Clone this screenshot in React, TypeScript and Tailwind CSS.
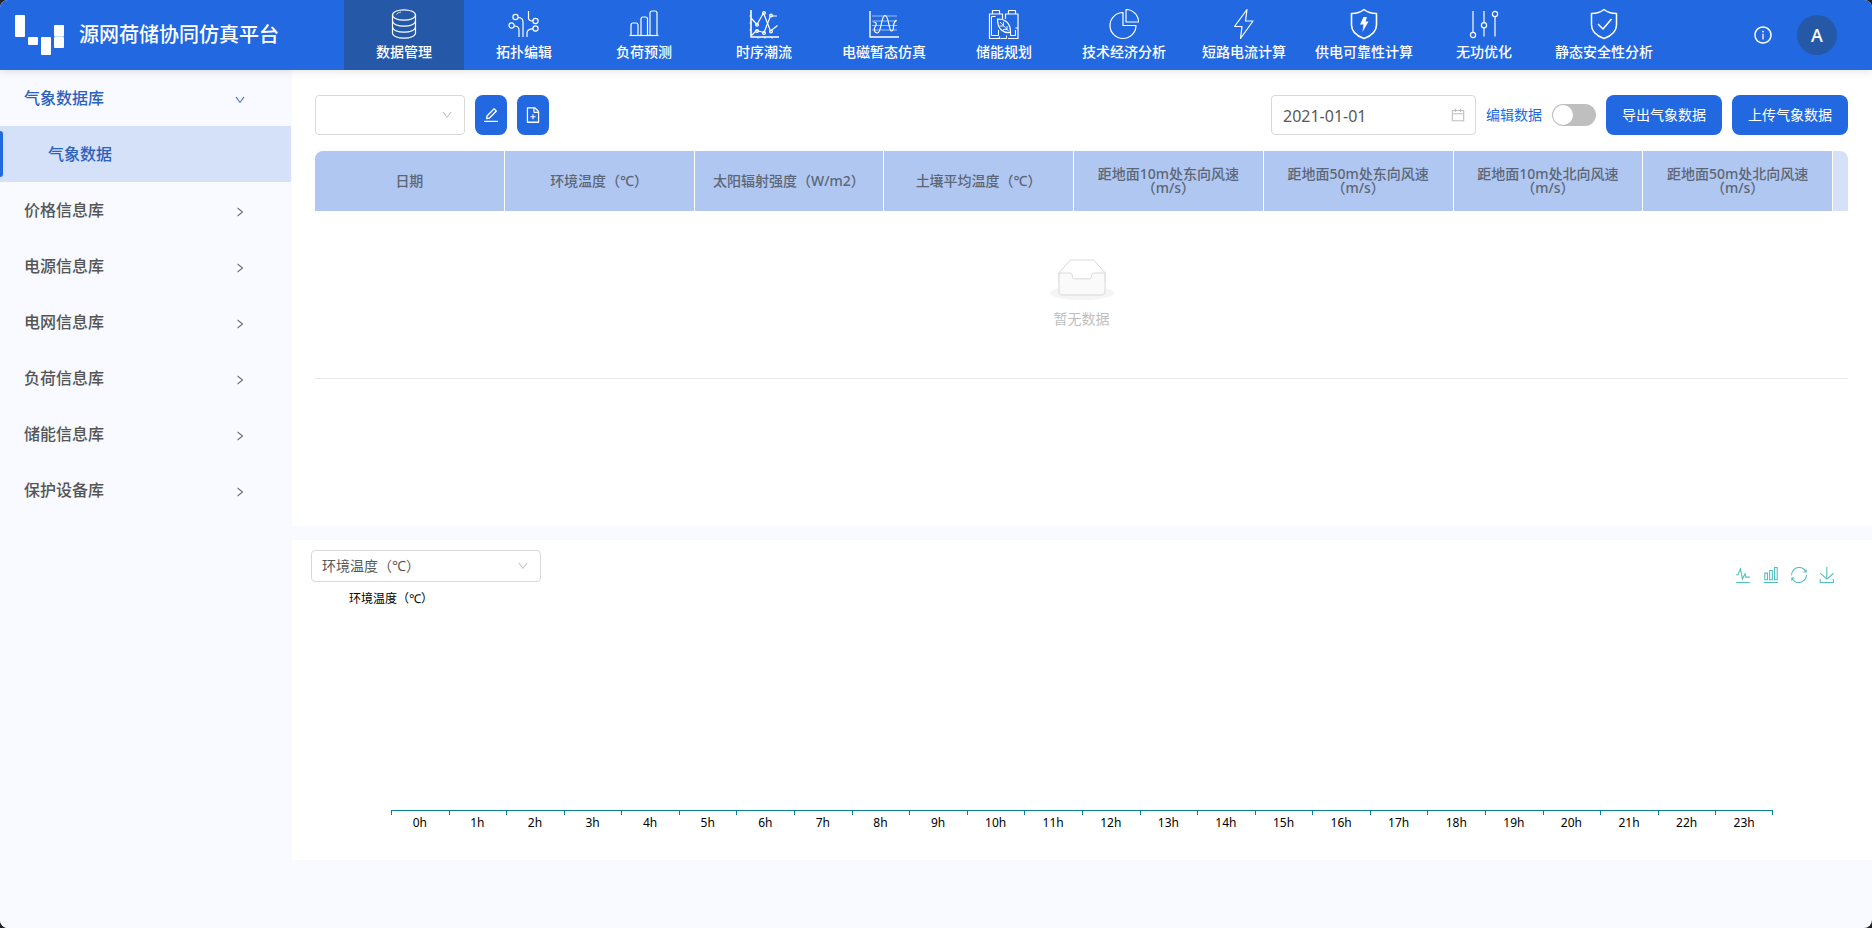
import React, { useState } from "react";
import {
  AiOutlineCalendar,
  AiOutlineDown,
  AiOutlineEdit,
  AiOutlineFileAdd,
  AiOutlineInfoCircle,
  AiOutlineRight,
} from "react-icons/ai";

function NavSvg({ children }: { children: React.ReactNode }) {
  return (
    <svg
      className="h-8 w-8"
      viewBox="0 0 32 32"
      fill="none"
      stroke="currentColor"
      strokeWidth="1.2"
      strokeLinejoin="round"
      aria-hidden="true"
    >
      {children}
    </svg>
  );
}

const DatabaseIcon = (
  <NavSvg>
    <ellipse cx="16" cy="7" rx="11.5" ry="5.2" />
    <path d="M4.500 7v18c0 2.900 5.100 5.200 11.500 5.200s11.500-2.300 11.500-5.200V7" />
    <path d="M4.500 13c0 2.900 5.100 5.200 11.500 5.200s11.500-2.300 11.500-5.200M4.500 19c0 2.900 5.100 5.200 11.500 5.200s11.500-2.300 11.500-5.200" />
    <path d="M8.500 6.500c1-1.500 2.500-2.100 4.500-2.400" strokeWidth="0.8" />
  </NavSvg>
);

const TopologyIcon = (
  <NavSvg>
    <circle cx="7.500" cy="9" r="2.600" />
    <circle cx="3.600" cy="17.500" r="2.600" />
    <circle cx="27.500" cy="13" r="2.600" />
    <circle cx="27.500" cy="20.500" r="2.600" />
    <path d="M10.100 9.500c3.600 0 4.900 1.500 4.900 4.500v15M6.200 18c3.300 0 4.800 1 4.800 4v7" />
    <path d="M20.500 3v7c0 2 1.500 3 4.400 3M24.900 20.800c-4.200 0-5.900 1.200-5.900 4.200v4" />
  </NavSvg>
);

const BarsIcon = (
  <NavSvg>
    <path d="M1.500 27.500h29" />
    <path d="M3 27.500V17a2 2 0 0 1 2-2h3a2 2 0 0 1 2 2v10.500M13 27.500V11a2 2 0 0 1 2-2h2.500a2 2 0 0 1 2 2v16.500M22 27.500V5a2 2 0 0 1 2-2h3a2 2 0 0 1 2 2v22.500" />
  </NavSvg>
);

const SeriesIcon = (
  <NavSvg>
    <path d="M3 2v27h28" strokeWidth="1.600" />
    <path d="M1.500 8h1.500M1.500 15h1.500M1.500 22h1.500M10 29v1.500M17 29v1.500M24 29v1.500" />
    <path d="M3 10l6 6.500L15.500 5l7 18 7-5.500" />
    <path d="M3.500 27.500l5-5 7.500 2L22.500 8h6.500" />
    <circle cx="9" cy="16.800" r="1.400" />
    <circle cx="16" cy="5" r="1.400" />
    <circle cx="23" cy="7.500" r="1.400" />
    <circle cx="9" cy="23" r="1.400" />
    <circle cx="16" cy="25" r="1.400" />
    <circle cx="23" cy="23.500" r="1.400" />
  </NavSvg>
);

const WaveIcon = (
  <NavSvg>
    <path d="M2 3v26h29" strokeWidth="1.400" />
    <path d="M4 8h25M4 13h25M4 17.500h25M4 22h25" strokeWidth="0.700" opacity="0.800" />
    <path d="M5.500 14c3 0 3.500 2 2 4s-2 7 2 7 3.500-17.500 7.500-17.500 3.500 15.500 6.500 15.500 1.500-5 2.500-7.500 1.500-2.500 2.500-3.500" />
  </NavSvg>
);

const BatteryIcon = (
  <NavSvg>
    <path d="M11.500 28.500v2H1.500V6h13v5M4.500 6V2.500h7V6M30 20V6H17.500v5M20.500 6V2.500h7V6M20 30.500h10V20h-2.500" />
    <path d="M3.500 27.500h7V22M3.500 27.500V8.500h4M12.500 30.500h6v-3" strokeWidth="1" />
    <path d="M9.500 11c6 0 13 2 13 13.500-7 1-13-3-13-13.500z" />
    <path d="M12 14l9 9.500M15.500 14v4h-4M19 18v3.500h-4" strokeWidth="0.900" />
    <path d="M22.500 24.500v3h5V22" strokeWidth="1" />
  </NavSvg>
);

const PieIcon = (
  <NavSvg>
    <path d="M15 4.500A13 13 0 1 0 28 17.500H15z" />
    <path d="M18 1.500a12.500 12.500 0 0 1 12.500 12.500H18z" />
  </NavSvg>
);

const BoltIcon = (
  <NavSvg>
    <path d="M19 1.500L6.500 18.500h7.500L12.500 30.500 25 13h-7.500z" />
  </NavSvg>
);

const ShieldBoltIcon = (
  <NavSvg>
    <path
      d="M16 1.500c3 2.500 7.500 4 12.500 4v11.500c0 6.500-5.500 11-12.500 13.500C9 28 3.500 23.500 3.500 17V5.500c5 0 9.500-1.500 12.500-4z"
      strokeWidth="1.600"
    />
    <path d="M15.500 9h3.500l-1.500 4.500h3L14.500 24l1-7.500h-3.500z" fill="currentColor" stroke="none" />
  </NavSvg>
);

const SlidersIcon = (
  <NavSvg>
    <path d="M5 3v21.500M16 3v11.500M16 20v8.500M27 8.500v20" />
    <circle cx="5" cy="27" r="2.600" />
    <circle cx="16" cy="17.200" r="2.600" />
    <circle cx="27" cy="6" r="2.600" />
  </NavSvg>
);

const ShieldCheckIcon = (
  <NavSvg>
    <path
      d="M16 1.500c3 2.500 7.500 4 12.500 4v11.500c0 6.500-5.500 11-12.500 13.500C9 28 3.500 23.500 3.500 17V5.500c5 0 9.500-1.500 12.500-4z"
      strokeWidth="1.500"
    />
    <path d="M10 16l5 5L23.500 11" strokeWidth="1.500" />
  </NavSvg>
);

const navItems = [
  { label: "数据管理", icon: DatabaseIcon },
  { label: "拓扑编辑", icon: TopologyIcon },
  { label: "负荷预测", icon: BarsIcon },
  { label: "时序潮流", icon: SeriesIcon },
  { label: "电磁暂态仿真", icon: WaveIcon },
  { label: "储能规划", icon: BatteryIcon },
  { label: "技术经济分析", icon: PieIcon },
  { label: "短路电流计算", icon: BoltIcon },
  { label: "供电可靠性计算", icon: ShieldBoltIcon },
  { label: "无功优化", icon: SlidersIcon },
  { label: "静态安全性分析", icon: ShieldCheckIcon },
];

const menuItems = [
  "价格信息库",
  "电源信息库",
  "电网信息库",
  "负荷信息库",
  "储能信息库",
  "保护设备库",
];

const columns = [
  "日期",
  "环境温度（℃）",
  "太阳辐射强度（W/m2）",
  "土壤平均温度（℃）",
  "距地面10m处东向风速（m/s）",
  "距地面50m处东向风速（m/s）",
  "距地面10m处北向风速（m/s）",
  "距地面50m处北向风速（m/s）",
];

const chartTools = [
  {
    label: "折线图",
    d: "M4.1,28.9h7.1l9.3-22l7.4,38l9.7-19.7l3,12.8h14.9M4.1,58h51.4",
  },
  {
    label: "柱状图",
    d: "M6.7,22.9h10V48h-10V22.9zM24.9,13h10v35h-10V13zM43.2,2h10v46h-10V2zM3.1,58h53.7",
  },
  {
    label: "还原",
    d: "M47,18.9h9.8V8.7M56.3,20.1C52.1,9,40.5,0.6,26.8,2.1C12.6,3.7,1.6,16.2,2.1,30.6M13,41.1H3.1v10.2M3.7,39.9c4.2,11.1,15.8,19.5,29.5,18c14.2-1.6,25.2-14.1,24.7-28.5",
  },
  {
    label: "保存为图片",
    d: "M4.7,22.9L29.3,45.5L54.7,23.4M4.6,43.6L4.6,58L53.8,58L53.8,43.6M29.2,45.1L29.2,0",
  },
];

function Header() {
  return (
    <header className="relative z-10 flex h-[70px] items-center bg-[#2168e1] text-white shadow-[0_2px_8px_rgba(0,0,0,0.1)]">
      <div className="flex w-[344px] shrink-0 items-center gap-3.5 pl-[15px]">
        <svg className="h-10 w-[50px]" viewBox="0 0 50 40" fill="#fff" aria-hidden="true">
          <rect x="0" y="0" width="10" height="22" rx="1" />
          <rect x="13" y="22" width="10" height="8" rx="1" />
          <rect x="26" y="22" width="10" height="18" rx="1" />
          <rect x="39" y="10" width="10" height="11.700" rx="1" />
          <rect x="39" y="22" width="10" height="11" rx="1" />
        </svg>
        <h1 className="text-xl font-medium whitespace-nowrap">源网荷储协同仿真平台</h1>
      </div>
      <nav className="flex h-full">
        {navItems.map((item, i) => (
          <a
            key={item.label}
            href="#"
            className={
              i === 0
                ? "flex w-[120px] flex-col items-center bg-[#2559a8] pt-2"
                : "flex w-[120px] flex-col items-center pt-2"
            }
          >
            {item.icon}
            <span className="mt-0.5 text-sm font-medium whitespace-nowrap">{item.label}</span>
          </a>
        ))}
      </nav>
      <div className="ml-auto flex items-center gap-6 pr-[35px]">
        <button type="button" aria-label="信息" className="text-xl">
          <AiOutlineInfoCircle />
        </button>
        <button
          type="button"
          className="flex size-10 items-center justify-center rounded-full bg-[#2559a8] text-lg font-medium"
        >
          A
        </button>
      </div>
    </header>
  );
}

function Sidebar() {
  return (
    <aside className="w-[292px] shrink-0 bg-[#f8faff] pr-px text-base font-medium text-[#555]">
      <button
        type="button"
        className="flex h-14 w-full items-center justify-between pr-[45px] pl-6 text-[#2b62bd]"
      >
        气象数据库
        <AiOutlineDown className="mt-1 size-3" />
      </button>
      <a
        href="#"
        className="relative flex h-14 items-center bg-[#d4e1f8] pl-12 text-[#2b62bd] before:absolute before:left-0 before:h-[46px] before:w-[3px] before:rounded-r-sm before:bg-[#2168e1]"
      >
        气象数据
      </a>
      {menuItems.map((label) => (
        <button
          key={label}
          type="button"
          className="flex h-14 w-full items-center justify-between pr-[45px] pl-6"
        >
          {label}
          <AiOutlineRight className="mt-1 size-3" />
        </button>
      ))}
    </aside>
  );
}

function EmptyImage() {
  return (
    <svg className="h-[41px] w-16" viewBox="0 0 64 41" aria-hidden="true">
      <g transform="translate(0 1)" fill="none" fillRule="evenodd">
        <ellipse fill="#f5f5f5" cx="32" cy="33" rx="32" ry="7" />
        <g fillRule="nonzero" stroke="#d9d9d9">
          <path d="M55 12.76L44.854 1.258C44.367.474 43.656 0 42.907 0H21.093c-.749 0-1.46.474-1.947 1.257L9 12.761V22h46v-9.24z" />
          <path
            d="M41.613 15.931c0-1.605.994-2.93 2.227-2.931H55v18.137C55 33.26 53.68 35 52.05 35h-40.1C10.32 35 9 33.259 9 31.137V13h11.16c1.233 0 2.227 1.323 2.227 2.928v.022c0 1.605 1.005 2.901 2.237 2.901h14.752c1.232 0 2.237-1.308 2.237-2.913v-.007z"
            fill="#fafafa"
          />
        </g>
      </g>
    </svg>
  );
}

function DataPanel() {
  const [date, setDate] = useState("2021-01-01");
  const [editing, setEditing] = useState(false);
  return (
    <section className="min-h-[456px] bg-white px-6 pt-[25px] pl-[23px]">
      <div className="flex items-center gap-2.5">
        <div className="relative">
          <select
            aria-label="气象数据集"
            className="h-10 w-[150px] appearance-none rounded border border-[#d9d9d9] bg-white px-3"
          >
            <option value=""></option>
          </select>
          <AiOutlineDown className="pointer-events-none absolute top-3.5 right-3 size-3 text-[#bfbfbf]" />
        </div>
        <button
          type="button"
          aria-label="编辑"
          className="flex h-10 w-8 items-center justify-center rounded-lg bg-[#2168e1] text-lg text-white"
        >
          <AiOutlineEdit />
        </button>
        <button
          type="button"
          aria-label="新建"
          className="flex h-10 w-8 items-center justify-center rounded-lg bg-[#2168e1] text-lg text-white"
        >
          <AiOutlineFileAdd />
        </button>
        <div className="relative ml-auto">
          <input
            aria-label="日期"
            value={date}
            onChange={(e) => setDate(e.target.value)}
            className="h-10 w-[205px] rounded border border-[#d9d9d9] bg-white px-[11px] pt-0.5 text-base text-[#595959]"
          />
          <AiOutlineCalendar className="pointer-events-none absolute top-3 right-2.5 size-4 text-[#bfbfbf]" />
        </div>
        <label className="flex items-center gap-2.5 text-sm text-[#2168e1]">
          编辑数据
          <input
            type="checkbox"
            role="switch"
            checked={editing}
            onChange={(e) => setEditing(e.target.checked)}
            className="h-[22px] w-11 appearance-none rounded-full bg-[#bfbfbf] p-px before:block before:size-5 before:rounded-full before:bg-white checked:bg-[#2168e1] checked:before:ml-auto"
          />
        </label>
        <button type="button" className="h-10 w-[116px] rounded-lg bg-[#2168e1] text-sm text-white">
          导出气象数据
        </button>
        <button type="button" className="h-10 w-[116px] rounded-lg bg-[#2168e1] text-sm text-white">
          上传气象数据
        </button>
      </div>
      <table className="mt-4 w-full table-fixed border-separate border-spacing-0 text-sm text-[#5c6675]">
        <thead>
          <tr>
            {columns.map((label) => (
              <th
                key={label}
                scope="col"
                className="h-[60px] border-r border-white bg-[#b0c7f2] px-4 py-0 leading-[14px] font-medium first:rounded-tl-lg"
              >
                {label}
              </th>
            ))}
            <td className="w-[15px] rounded-tr-lg bg-[#d4e1f8] p-0" />
          </tr>
        </thead>
        <tbody>
          <tr>
            <td colSpan={9} className="border-b border-[#e8e8e8] p-4">
              <div className="my-8 flex flex-col items-center gap-2 leading-[22px] text-[#bfbfbf]">
                <EmptyImage />
                暂无数据
              </div>
            </td>
          </tr>
        </tbody>
      </table>
    </section>
  );
}

function ChartPanel() {
  const hours = Array.from({ length: 24 }, (_, i) => i);
  return (
    <section className="mt-3.5 flex min-h-80 flex-col bg-white pt-2.5">
      <div className="flex items-start justify-between pr-[37px] pl-[19px]">
        <div className="relative">
          <select
            aria-label="图表指标"
            className="h-8 w-[230px] appearance-none rounded border border-[#d9d9d9] bg-white px-2.5 text-sm text-[#595959]"
          >
            <option>环境温度（℃）</option>
          </select>
          <AiOutlineDown className="pointer-events-none absolute top-2.5 right-3 size-3 text-[#bfbfbf]" />
        </div>
        <div className="flex gap-3 pt-[17px]">
          {chartTools.map((tool) => (
            <button key={tool.label} type="button" aria-label={tool.label} className="size-4">
              <svg
                className="size-4 overflow-visible"
                viewBox="0 0 60 60"
                fill="none"
                stroke="#4fc0bd"
                strokeWidth="4"
                aria-hidden="true"
              >
                <path d={tool.d} />
              </svg>
            </button>
          ))}
        </div>
      </div>
      <div className="mt-2 pl-[57px] text-xs text-black">环境温度（℃）</div>
      <div className="mt-auto mb-[29px] grid grid-cols-24 px-[99px] text-center text-xs text-black">
        {hours.map((h) => (
          <div
            key={h}
            className="relative border-t border-[#0b7e9c] pt-1 before:absolute before:top-0 before:left-0 before:h-1 before:w-px before:bg-[#0b7e9c] last:after:absolute last:after:top-0 last:after:right-0 last:after:h-1 last:after:w-px last:after:bg-[#0b7e9c]"
          >
            {h}h
          </div>
        ))}
      </div>
    </section>
  );
}

export default function App() {
  return (
    <div className="min-h-screen bg-[#222] font-['Noto_Sans','Noto_Sans_CJK_SC',sans-serif]">
      <div className="flex min-h-screen flex-col overflow-hidden rounded-lg bg-[#f8faff]">
        <Header />
        <div className="flex flex-1">
          <Sidebar />
          <main className="min-w-0 flex-1">
            <DataPanel />
            <ChartPanel />
          </main>
        </div>
      </div>
    </div>
  );
}
